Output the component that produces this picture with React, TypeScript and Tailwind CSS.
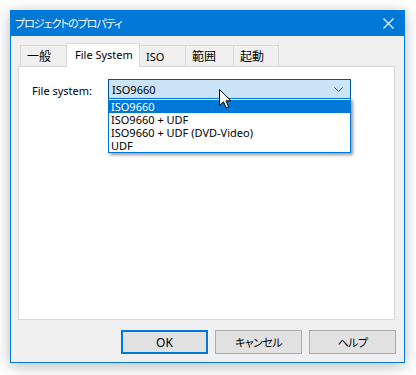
import React from 'react';

const font = "font-['Noto_Sans','Noto_Sans_CJK_JP',sans-serif] [font-feature-settings:'palt']";

const tabs = [
  { label: '一般', w: 'w-[47px]', cjk: true },
  { label: 'File System', w: 'w-[74px]', active: true },
  { label: 'ISO', w: 'w-[47px]' },
  { label: '範囲', w: 'w-[49px]', cjk: true },
  { label: '起動', w: 'w-[46px]', cjk: true },
];

const options = ['ISO9660', 'ISO9660 + UDF', 'ISO9660 + UDF (DVD-Video)', 'UDF'];

const Tab: React.FC<{ label: string; w: string; active?: boolean; cjk?: boolean }> = ({ label, w, active, cjk }) =>
  active ? (
    <div className={`${w} -ml-px relative z-10 -mb-px h-[24px] bg-white border border-b-0 border-[#d9d9d9] flex items-center pl-[8px] pb-[2px]`}>
      {label}
    </div>
  ) : (
    <div
      className={`${w} -ml-px first:ml-0 h-[21px] bg-[#f0f0f0] border border-b-0 border-[#d9d9d9] flex items-center pl-[6px] ${
        cjk ? 'text-[12px]' : ''
      }`}
    >
      {label}
    </div>
  );

const Button: React.FC<{ label: string; primary?: boolean; cjk?: boolean }> = ({ label, primary, cjk }) => (
  <div
    className={`w-[87px] h-[24px] bg-[#e1e1e1] flex items-center justify-center ${
      primary ? 'border-2 border-[#0078d7] text-[12px]' : 'border border-[#adadad]'
    } ${cjk ? 'tracking-[-0.6px]' : ''}`}
  >
    {label}
  </div>
);

export default function App() {
  return (
    <div className={`relative w-[416px] h-[375px] bg-white overflow-hidden text-[11px] leading-[13px] text-black ${font}`}>
      <div className="ml-[10px] mt-[10px] w-[395px] h-[353px] border border-[#0078d7] bg-[#f0f0f0] shadow-[0_3px_14px_rgba(0,0,0,0.28)] flex flex-col">
        {/* title bar */}
        <div className="h-[25px] bg-[#0078d7] flex items-center justify-between pl-[4px] pr-[10px] text-white">
          <span className="tracking-[-1px]">プロジェクトのプロパティ</span>
          <svg width="11" height="11" viewBox="0 0 11 11" className="stroke-white">
            <path d="M0.5 0.5 L10.5 10.5 M10.5 0.5 L0.5 10.5" strokeWidth="1.1" fill="none" />
          </svg>
        </div>

        <div className="flex flex-col pl-[7px]">
          {/* tabs */}
          <div className="flex items-end mt-[7px] pl-[2px] h-[23px]">
            {tabs.map((t) => (
              <Tab key={t.label} {...t} />
            ))}
          </div>

          {/* panel */}
          <div className="w-[377px] h-[254px] bg-white border border-[#d9d9d9] pt-[12px] pl-[13px]">
            <div className="flex items-start">
              <div className="w-[76px] pt-[5px]">File system:</div>
              <div className="relative">
                <div className="w-[243px] h-[21px] bg-[#cce4f7] border border-[#005499] flex items-center justify-between pl-[3px] pr-[7px]">
                  <span>ISO9660</span>
                  <svg width="9" height="5" viewBox="0 0 9 5">
                    <path d="M0.5 0.5 L4.5 4.5 L8.5 0.5" stroke="#444" strokeWidth="1" fill="none" />
                  </svg>
                </div>
                <div className="absolute left-0 top-[19px] w-[243px] h-[55px] bg-white border border-[#0078d7] shadow-[2px_2px_3px_rgba(0,0,0,0.4)] flex flex-col pt-px">
                  {options.map((o, i) => (
                    <div
                      key={o}
                      className={`h-[13px] flex items-center pl-[2px] ${i === 0 ? 'bg-[#0078d7] text-white' : ''}`}
                    >
                      {o}
                    </div>
                  ))}
                </div>
              </div>
            </div>
          </div>

          {/* buttons */}
          <div className="flex justify-end gap-[7px] mt-[10px] pr-[8px]">
            <Button label="OK" primary />
            <Button label="キャンセル" cjk />
            <Button label="ヘルプ" cjk />
          </div>
        </div>
      </div>

      {/* mouse pointer */}
      <svg className="absolute left-[219px] top-[89px]" width="13" height="20" viewBox="0 0 13 20">
        <path
          d="M0.5 0.5 V16.5 L4.5 12.8 L7.2 18.8 L9.6 17.8 L7 11.8 H12 Z"
          fill="white"
          stroke="black"
          strokeWidth="1"
          strokeLinejoin="miter"
        />
      </svg>
    </div>
  );
}
